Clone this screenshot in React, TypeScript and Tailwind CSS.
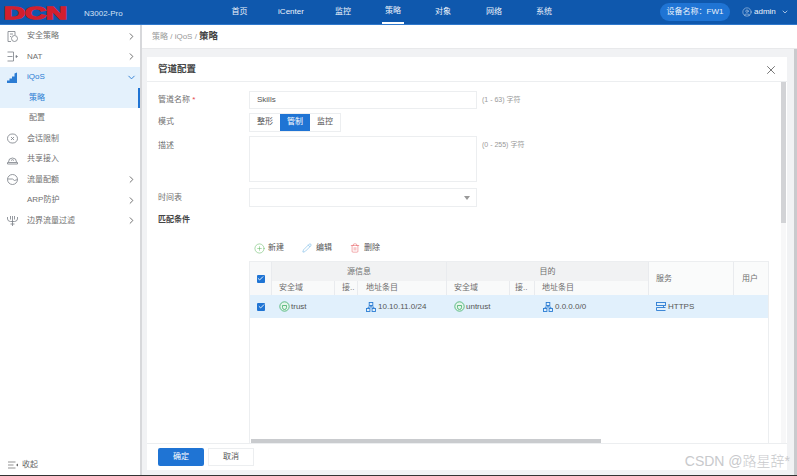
import { ChevronDown, ChevronRight, CirclePlus, Pencil, Trash2, X, CircleUser, Check } from "lucide-react"

const font = "font-['Liberation_Sans','Noto_Sans_CJK_SC',sans-serif]"

function Logo() {
  return (
    <svg width="70" height="20" viewBox="0 0 70 20">
      <text x="4" y="17" fontFamily="Liberation Sans" fontWeight="700" fontSize="17" fill="#d21f2e" stroke="#d21f2e" strokeWidth="1.4" textLength="63" lengthAdjust="spacingAndGlyphs">
        DCN
      </text>
    </svg>
  )
}

function SideIcon({ name }: { name: string }) {
  const c = "#7a7f87"
  if (name === "policy")
    return (
      <svg width="13" height="13" viewBox="0 0 13 13" fill="none" stroke={c} strokeWidth="0.8">
        <path d="M9 5V1.500H2v10h3" />
        <path d="M4 4h3M4 6.500h1" />
        <circle cx="8.500" cy="8.500" r="3" />
      </svg>
    )
  if (name === "nat")
    return (
      <svg width="13" height="13" viewBox="0 0 13 13" fill="none" stroke={c} strokeWidth="0.8">
        <path d="M1.500 2h6v9h-6M1.500 6.500h5" />
        <path d="M10 5.500l1.500 1-1.500 1z" fill={c} />
      </svg>
    )
  if (name === "qos")
    return (
      <svg width="13" height="13" viewBox="0 0 13 13" fill="#2b7cd3">
        <path d="M1 12V9.500h2.500V7.500H6V5.500h2.500V2.500L11 1.500V12z" />
      </svg>
    )
  if (name === "session")
    return (
      <svg width="13" height="13" viewBox="0 0 13 13" fill="none" stroke={c} strokeWidth="0.8">
        <rect x="1.500" y="2" width="10" height="9" rx="4.500" />
        <path d="M5 5l3 3M8 5l-3 3" />
      </svg>
    )
  if (name === "share")
    return (
      <svg width="13" height="13" viewBox="0 0 13 13" fill="none" stroke={c} strokeWidth="0.8">
        <path d="M2.500 9a4 4 0 1 1 8 0" />
        <path d="M1.500 9.500h10v1.500h-10zM5 7.500a2 2 0 0 1 3 0" />
      </svg>
    )
  if (name === "quota")
    return (
      <svg width="13" height="13" viewBox="0 0 13 13" fill="none" stroke={c} strokeWidth="0.8">
        <circle cx="6.500" cy="6.500" r="5" />
        <path d="M1.500 6h5l2 1.500 3-1" />
      </svg>
    )
  if (name === "border")
    return (
      <svg width="13" height="13" viewBox="0 0 13 13" fill="none" stroke={c} strokeWidth="0.8">
        <path d="M1.500 3v2a3 3 0 0 0 3 2.500h4a3 3 0 0 0 3-2.500V3M4.500 2v3.500M8.500 2v3.500M6.500 2v10M4.500 10h4" />
      </svg>
    )
  return <span className="w-[13px]" />
}

const menu = [
  { icon: "policy", label: "安全策略", arrow: "right" },
  { icon: "nat", label: "NAT", arrow: "right" },
  { icon: "qos", label: "iQoS", arrow: "down", open: true },
  { icon: "", label: "策略", sub: true, active: true },
  { icon: "", label: "配置", sub: true },
  { icon: "session", label: "会话限制" },
  { icon: "share", label: "共享接入" },
  { icon: "quota", label: "流量配额", arrow: "right" },
  { icon: "", label: "ARP防护", arrow: "right" },
  { icon: "border", label: "边界流量过滤", arrow: "right" },
]

function Sidebar() {
  return (
    <aside className="w-[140px] shrink-0 bg-white flex flex-col pt-[1px]">
      {menu.map((m) => (
        <div
          key={m.label}
          className={
            "h-[20.5px] flex items-center text-[8px] " +
            (m.open || m.active ? "bg-[#e4f1fc] " : "") +
            (m.active ? "border-r-2 border-[#1f74d4] " : "") +
            (m.open || m.active ? "text-[#2b7cd3]" : "text-[#6f6f6f]")
          }
        >
          {m.sub ? (
            <span className="ml-[29px]">{m.label}</span>
          ) : (
            <>
              <span className="ml-[6px] w-[21px] flex">
                <SideIcon name={m.icon} />
              </span>
              <span className="flex-1">{m.label}</span>
              {m.arrow === "right" && <ChevronRight size={11} className="mr-[3px] text-[#666]" />}
              {m.arrow === "down" && <ChevronDown size={11} className="mr-[3px] text-[#2b7cd3]" />}
            </>
          )}
        </div>
      ))}
      <div className="mt-auto h-[21px] flex items-center pl-[8px] gap-[4px] text-[8px] text-[#666]">
        <svg width="10" height="8" viewBox="0 0 10 8" fill="none" stroke="#666" strokeWidth="0.7">
          <path d="M0 1h7.500M0 4h5.500M0 7h7.500" />
          <path d="M10 2.500v3L8 4z" fill="#666" stroke="none" />
        </svg>
        收起
      </div>
    </aside>
  )
}

function Field({ label, required, children, className, labelClass }: { label: string; required?: boolean; children?: React.ReactNode; className?: string; labelClass?: string }) {
  return (
    <div className={"flex text-[8px] " + (className ?? "")}>
      <div className={"w-[91px] text-[#6f6f6f] shrink-0 " + (labelClass ?? "")}>
        {label}
        {required && <span className="text-[#e5484d]"> *</span>}
      </div>
      {children}
    </div>
  )
}

function Zone({ name }: { name: string }) {
  return (
    <span className="flex items-center gap-[1px]">
      <svg width="11" height="11" viewBox="0 0 11 11" fill="#e4f5ea" stroke="#3fae6a" strokeWidth="0.8">
        <circle cx="5.500" cy="5.500" r="4.700" />
        <path d="M3.500 4.500h4v2a2 2 0 0 1-4 0z" fill="none" />
      </svg>
      {name}
    </span>
  )
}

function Addr({ name }: { name: string }) {
  return (
    <span className="flex items-center gap-[2px]">
      <svg width="10" height="10" viewBox="0 0 10 10" fill="none" stroke="#2b7cd3" strokeWidth="0.9">
        <rect x="3.200" y="0.500" width="3.600" height="3" />
        <rect x="0.500" y="6.500" width="3.400" height="3" />
        <rect x="6.100" y="6.500" width="3.400" height="3" />
        <path d="M5 3.500V5M2.200 6.500V5h5.600v1.500" />
      </svg>
      {name}
    </span>
  )
}

function Checked() {
  return (
    <span className="w-[8px] h-[8px] rounded-[1px] bg-[#1f74d4] flex items-center justify-center">
      <Check size={7} strokeWidth={3} className="text-white" />
    </span>
  )
}

function Table() {
  const head = "border-r border-[#e9ebee] flex items-center"
  return (
    <div className="mt-[7px] ml-[102px] w-[520px] flex-1 min-h-0 border-x border-t border-[#eceef0] relative text-[8px] text-[#6f6f6f]">
      <div className="flex h-[33px]">
        <div className={head + " w-[22px] justify-center bg-[#f7f8f9]"}>
          <Checked />
        </div>
        <div className="w-[175px] flex flex-col border-r border-[#e9ebee]">
          <div className="h-[19px] bg-[#f1f2f3] flex items-center justify-center">源信息</div>
          <div className="flex-1 flex bg-[#f9fafa]">
            <div className={head + " w-[63px] pl-[7px]"}>安全域</div>
            <div className={head + " w-[23px] pl-[7px]"}>接..</div>
            <div className="flex items-center pl-[8px]">地址条目</div>
          </div>
        </div>
        <div className="w-[202px] flex flex-col border-r border-[#e9ebee]">
          <div className="h-[19px] bg-[#f1f2f3] flex items-center justify-center">目的</div>
          <div className="flex-1 flex bg-[#f9fafa]">
            <div className={head + " w-[63px] pl-[7px]"}>安全域</div>
            <div className={head + " w-[25px] pl-[5px]"}>接..</div>
            <div className="flex items-center pl-[7px]">地址条目</div>
          </div>
        </div>
        <div className={head + " w-[85px] pl-[7px] bg-[#fafbfb]"}>服务</div>
        <div className="flex-1 flex items-center pl-[8px] bg-[#fafbfb]">用户</div>
      </div>
      <div className="flex h-[23px] items-center bg-[#e1f0fc] text-[#555]">
        <div className="w-[22px] flex justify-center">
          <Checked />
        </div>
        <div className="w-[94px] pl-[7px]">
          <Zone name="trust" />
        </div>
        <div className="w-[81px]">
          <Addr name="10.10.11.0/24" />
        </div>
        <div className="w-[96px] pl-[7px]">
          <Zone name="untrust" />
        </div>
        <div className="w-[106px]">
          <Addr name="0.0.0.0/0" />
        </div>
        <div className="flex items-center gap-[2px] pl-[7px]">
          <svg width="10" height="9" viewBox="0 0 10 9" fill="none" stroke="#2b7cd3" strokeWidth="0.9">
            <rect x="0.500" y="0.500" width="9" height="3" />
            <path d="M9.500 5.500h-9v3h9M7.500 3.500v2" />
          </svg>
          HTTPS
        </div>
      </div>
      <div className="absolute left-[1px] bottom-0 w-[350px] h-[4px] bg-[#c9cbce]" />
    </div>
  )
}

export default function App() {
  return (
    <div className={"w-[797px] h-[476px] flex flex-col overflow-hidden bg-[#e4e5e8] relative " + font}>
      <header className="h-[25px] shrink-0 bg-[#0f58ad] border-b border-[#2f78cc] flex items-center text-[#edf3fb] text-[8px]">
        <div className="w-[84px] shrink-0">
          <Logo />
        </div>
        <span className="w-[46px] shrink-0 whitespace-nowrap text-[#d5e3f5] mt-[3px]">N3002-Pro</span>
        <nav className="flex ml-[84px] items-center h-full">
          <span className="w-[51px] text-center">首页</span>
          <span className="w-[52px] text-center">iCenter</span>
          <span className="w-[52px] text-center">监控</span>
          <span className="w-[48px] h-full flex justify-center">
            <span className="w-[22px] h-full flex items-center justify-center border-b-2 border-white">策略</span>
          </span>
          <span className="w-[52px] text-center">对象</span>
          <span className="w-[50px] text-center">网络</span>
          <span className="w-[50px] text-center">系统</span>
        </nav>
        <span className="ml-[91px] w-[70px] h-[18px] shrink-0 rounded-full bg-[#1f74d4] flex items-center justify-center whitespace-nowrap">设备名称：FW1</span>
        <span className="ml-[12px] flex items-center gap-[2px] whitespace-nowrap">
          <CircleUser size={10} strokeWidth={1.1} />
          admin
          <ChevronDown size={8} className="ml-[3px]" />
        </span>
      </header>
      <div className="flex flex-1 min-h-0">
        <Sidebar />
        <main className="flex-1 min-w-0 flex flex-col border-l-2 border-[#d7d8db] bg-[#f1f2f4] relative">
          <div className="h-[24px] shrink-0 bg-white border-b border-[#e8e9eb] flex items-center pl-[10px] text-[8px] text-[#999] gap-[2px]">
            策略 / iQoS /<span className="text-[9.500px] font-bold text-[#444]">策略</span>
          </div>
          <div className="flex-1 min-h-0 flex">
            <section className="mt-[8px] ml-[5px] mb-[5px] w-[640px] min-h-0 bg-white flex flex-col">
              <div className="h-[25px] shrink-0 pt-[1px] border-b border-[#eceef0] flex items-center justify-between pl-[11px] pr-[9px] text-[9.500px] font-bold text-[#444]">
                管道配置
                <X size={14} strokeWidth={1.5} className="text-[#666]" />
              </div>
              <div className="flex-1 min-h-0 flex relative">
                <div className="flex-1 min-w-0 flex flex-col pt-[9px]">
                  <div className="pl-[11px] flex flex-col">
                    <Field label="管道名称" required className="items-center h-[18px]">
                      <div className="w-[228px] h-[18px] border border-[#eceef0] flex items-center pl-[7px] text-[#555]">Skills</div>
                      <span className="ml-[5px] text-[7px] text-[#999]">(1 - 63) 字符</span>
                    </Field>
                    <Field label="模式" className="items-center h-[20px] mt-[3px]">
                      <div className="flex h-[19px] border border-[#eceef0] text-[#555]">
                        <span className="w-[30px] flex items-center justify-center">整形</span>
                        <span className="w-[30px] flex items-center justify-center bg-[#1f74d4] text-white">管制</span>
                        <span className="w-[30px] flex items-center justify-center">监控</span>
                      </div>
                    </Field>
                    <Field label="描述" className="mt-[4px]" labelClass="pt-[4px]">
                      <div className="w-[228px] h-[46px] border border-[#eceef0]" />
                      <span className="ml-[5px] mt-[4px] text-[7px] text-[#999]">(0 - 255) 字符</span>
                    </Field>
                    <Field label="时间表" className="items-center mt-[6px] h-[19px]">
                      <div className="w-[228px] h-[19px] border border-[#eceef0] flex items-center justify-end pr-[6px]">
                        <span className="w-0 h-0 border-x-[3px] border-x-transparent border-t-[4px] border-t-[#999]" />
                      </div>
                    </Field>
                    <div className="mt-[7px] h-[12px] text-[8px] font-bold text-[#444]">匹配条件</div>
                  </div>
                  <div className="mt-[16px] ml-[107px] flex items-center text-[8px] text-[#555] h-[12px]">
                    <CirclePlus size={11} strokeWidth={1.1} className="text-[#5cb85c] mr-[3px]" />
                    <span>新建</span>
                    <Pencil size={10} strokeWidth={1.1} className="text-[#4aa3df] ml-[18px] mr-[4px]" />
                    <span>编辑</span>
                    <Trash2 size={10} strokeWidth={1.1} className="text-[#e5484d] ml-[18px] mr-[4px]" />
                    <span>删除</span>
                  </div>
                  <Table />
                </div>
                <div className="absolute right-[1px] top-0 bottom-0 w-[5px] bg-[#f7f7f8]">
                  <div className="h-[141px] bg-[#d2d3d6]" />
                </div>
              </div>
              <div className="h-[27px] shrink-0 border-t border-[#eceef0] flex items-center pl-[11px] gap-[4px] text-[8px]">
                <button className="w-[46px] h-[18px] rounded-[2px] bg-[#1f74d4] text-white">确定</button>
                <button className="w-[46px] h-[18px] border border-[#eceef0] text-[#555]">取消</button>
              </div>
            </section>
            <div className="ml-auto w-[3px] bg-[#c9cacd]" />
          </div>
        </main>
      </div>
      <div className="h-[1px] shrink-0 bg-[#333]" />
      <span className="absolute right-[7px] bottom-[4px] text-[14px] font-light text-[#c8c9cc] whitespace-nowrap">CSDN @路星辞*</span>
    </div>
  )
}
